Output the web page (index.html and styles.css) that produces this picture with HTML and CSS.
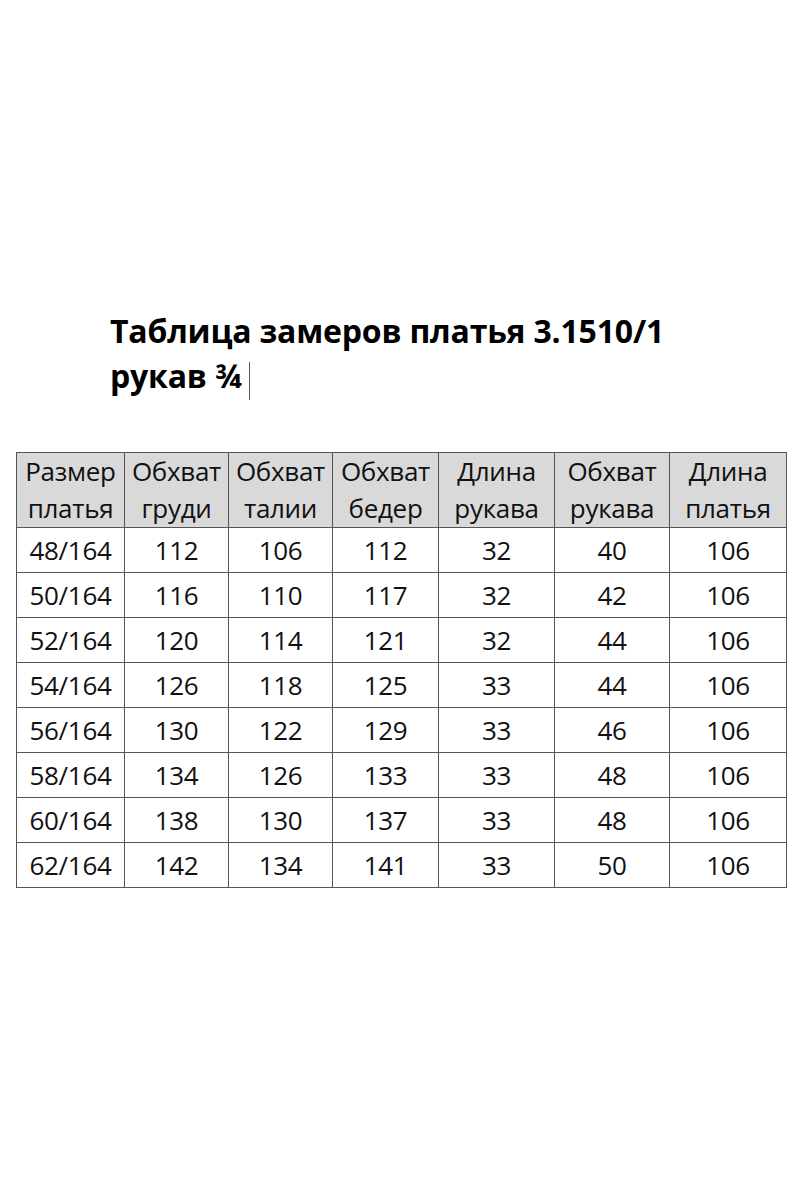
FILE: index.html
```html
<!DOCTYPE html>
<html lang="ru">
<head>
<meta charset="utf-8">
<link rel="stylesheet" href="styles.css">
</head>
<body>
<div class="page">
  <h1 class="title">Таблица замеров платья 3.1510/1<br>рукав ¾<span class="caret"></span></h1>
  <table class="sizes">
    <colgroup>
      <col class="c1"><col class="c2"><col class="c3"><col class="c4"><col class="c5"><col class="c6"><col class="c7">
    </colgroup>
    <thead>
      <tr>
        <th>Размер<br>платья</th>
        <th>Обхват<br>груди</th>
        <th>Обхват<br>талии</th>
        <th>Обхват<br>бедер</th>
        <th>Длина<br>рукава</th>
        <th>Обхват<br>рукава</th>
        <th>Длина<br>платья</th>
      </tr>
    </thead>
    <tbody>
      <tr><td>48/164</td><td>112</td><td>106</td><td>112</td><td>32</td><td>40</td><td>106</td></tr>
      <tr><td>50/164</td><td>116</td><td>110</td><td>117</td><td>32</td><td>42</td><td>106</td></tr>
      <tr><td>52/164</td><td>120</td><td>114</td><td>121</td><td>32</td><td>44</td><td>106</td></tr>
      <tr><td>54/164</td><td>126</td><td>118</td><td>125</td><td>33</td><td>44</td><td>106</td></tr>
      <tr><td>56/164</td><td>130</td><td>122</td><td>129</td><td>33</td><td>46</td><td>106</td></tr>
      <tr><td>58/164</td><td>134</td><td>126</td><td>133</td><td>33</td><td>48</td><td>106</td></tr>
      <tr><td>60/164</td><td>138</td><td>130</td><td>137</td><td>33</td><td>48</td><td>106</td></tr>
      <tr><td>62/164</td><td>142</td><td>134</td><td>141</td><td>33</td><td>50</td><td>106</td></tr>
    </tbody>
  </table>
</div>
</body>
</html>
```

FILE: styles.css
```css
html, body {
  margin: 0;
  padding: 0;
  background: #ffffff;
}
body {
  width: 800px;
  height: 1200px;
  font-family: "Open Sans", "DejaVu Sans", sans-serif;
  color: #111111;
}
.page {
  padding-top: 308px;
}
.title {
  margin: 0 0 52px 110px;
  font-size: 32px;
  font-weight: 700;
  line-height: 45px;
  letter-spacing: -0.2px;
  color: #000000;
}
.caret {
  display: inline-block;
  width: 1px;
  height: 38px;
  background: #555555;
  margin-left: 7px;
  vertical-align: -12px;
}
.sizes {
  margin-left: 16px;
  width: 770px;
  border-collapse: collapse;
  table-layout: fixed;
  font-size: 26px;
  letter-spacing: -0.3px;
}
.c1 { width: 108px; }
.c2 { width: 104px; }
.c3 { width: 104px; }
.c4 { width: 106px; }
.c5 { width: 116px; }
.c6 { width: 115px; }
.c7 { width: 117px; }
.sizes th,
.sizes td {
  border: 1px solid #555555;
  text-align: center;
  padding: 0;
  font-weight: 400;
  white-space: nowrap;
}
.sizes th {
  background: #d9d9d9;
  height: 74px;
  line-height: 37px;
}
.sizes td {
  height: 44px;
  line-height: 44px;
}
```
